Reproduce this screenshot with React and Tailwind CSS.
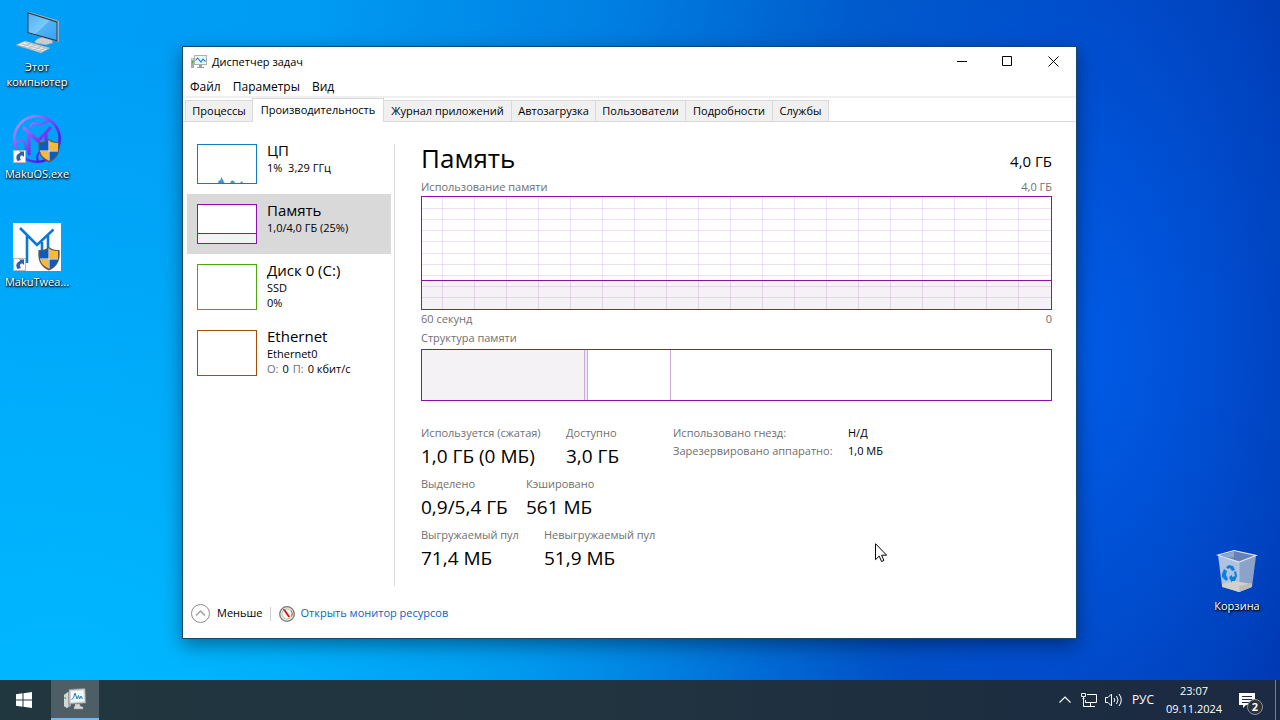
import React from "react";

const TABS = [
  { label: "Процессы", width: "w-[67px]" },
  { label: "Производительность", width: "w-[132px]", active: true },
  { label: "Журнал приложений", width: "w-[128px]" },
  { label: "Автозагрузка", width: "w-[84px]" },
  { label: "Пользователи", width: "w-[90px]" },
  { label: "Подробности", width: "w-[87px]" },
  { label: "Службы", width: "w-[56px]" },
];

const STATS = [
  { first: "w-[145px]", items: [["Используется (сжатая)", "1,0 ГБ (0 МБ)"], ["Доступно", "3,0 ГБ"]] },
  { first: "w-[105px]", items: [["Выделено", "0,9/5,4 ГБ"], ["Кэшировано", "561 МБ"]] },
  { first: "w-[123px]", items: [["Выгружаемый пул", "71,4 МБ"], ["Невыгружаемый пул", "51,9 МБ"]] },
];

function MonitorIcon({ className }) {
  return (
    <svg className={className} viewBox="0 0 24 22" aria-hidden="true">
      <path d="M1 7l4-3 3 1v13l-4 2-3-2z" fill="#a9abad" />
      <path d="M1 7l4-3v15l-1 1-3-2z" fill="#d5d7d8" />
      <circle cx="2.2" cy="10" r=".9" fill="#57c21c" />
      <path d="M6 1.500l16-1 .8 14.500L6 16z" fill="#d4d6d8" stroke="#86898c" strokeWidth=".7" />
      <path d="M8 3.300l12.500-.8.600 10.700L8 14z" fill="#f2fafe" />
      <path d="M8.500 11.500l2-1.500 1.500-5 2 6 1.500-3.500 1.200 3.500 1.300-3 1.500 3" fill="none" stroke="#2088c4" strokeWidth="1" />
      <path d="M12 16h5v2l3 1v2h-9v-2l1-1z" fill="#d5d7d9" stroke="#929597" strokeWidth=".5" />
    </svg>
  );
}

function TitleIcon() {
  return (
    <svg className="h-4 w-4" viewBox="0 0 16 16" aria-hidden="true">
      <path d="M0 4h3v10H0z" fill="#a9a9a9" />
      <path d="M.5 4.500h2v1.500h-2z" fill="#dcdcdc" />
      <path d="M1 7h1v2H1z" fill="#3fae27" />
      <path d="M3 1h13v10H3z" fill="#b0b0b0" />
      <path d="M4 2h11v8H4z" fill="#eaf8ff" />
      <path d="M4.500 6.500l2-2.500 3.500 4 2-3 2.500 2.500" fill="none" stroke="#1983bd" strokeWidth="1.100" />
      <path d="M8 11h3v2h2v1H6v-1h2z" fill="#9c9c9c" />
    </svg>
  );
}

function Shield() {
  return (
    <g transform="translate(0 -1)">
      <path d="M36 25c-3 2.500-6 3-10.500 3-1 11 2 16.500 10.500 20.500 8.500-4 11.500-9.500 10.500-20.500-4.500 0-7.500-.5-10.500-3z" fill="#58595b" />
      <path d="M35.500 27c-2.500 1.500-5 2-8.500 2v7.500h8.500z" fill="#0e5cb8" />
      <path d="M36.500 27c2.500 1.500 5 2 8.500 2v7.500h-8.500z" fill="#fdb933" />
      <path d="M27.300 37.500h8.200v8.800c-5-2.300-7.500-4.800-8.200-8.800z" fill="#fdb933" />
      <path d="M44.700 37.500h-8.200v8.800c5-2.300 7.500-4.800 8.200-8.800z" fill="#0e5cb8" />
      <path d="M36 26.500v20M27 37h18" stroke="#eaf1fa" strokeWidth="1" />
    </g>
  );
}

function ShortcutArrow() {
  return (
    <g>
      <rect x=".5" y="35.500" width="12" height="12" fill="#fafafa" stroke="#b9b9b9" />
      <path d="M4.500 46c-2.500-4-.5-7.500 3-8l-1.500-1.500h5v5.500l-1.500-1.500c-2.500 0-3.500 2-1.500 4.500z" fill="#2a60a8" />
    </g>
  );
}

function ComputerIcon() {
  return (
    <svg className="h-12 w-12" viewBox="0 0 48 48" aria-hidden="true">
      <defs>
        <linearGradient id="screen" x1="0" y1="0" x2="1" y2="1">
          <stop offset="0" stopColor="#4fb2f5" />
          <stop offset=".5" stopColor="#7cc9fb" />
          <stop offset=".52" stopColor="#4eb2f6" />
          <stop offset="1" stopColor="#3ca5ef" />
        </linearGradient>
      </defs>
      <path d="M24 31l5-2 10 3 1 3-7 2-11-2v-2z" fill="#c9cdd0" stroke="#83888c" strokeWidth=".5" />
      <path d="M15 3.500l30 9 .8 1v20.500l-31-9z" fill="#aeb3b7" />
      <path d="M14.500 4l30 9.500v20l-30-8.500z" fill="#263b4b" />
      <path d="M15.500 5.500l28 9v17.500l-28-7.800z" fill="url(#screen)" />
      <path d="M3 37l9-4 25 7-9 5z" fill="#e8ebed" stroke="#8f979d" strokeWidth=".6" />
      <path d="M6 37.500l24 6.500M9 36l24 6.500M12 34.500l24 6.500M9 39.500l9-4.500M14 41l9-4.500M20 42.500l9-4.500M25 44l8-4.500" stroke="#a7afb5" strokeWidth=".7" />
    </svg>
  );
}

function MakuOsIcon() {
  return (
    <svg className="h-12 w-12" viewBox="0 0 48 48" aria-hidden="true">
      <defs>
        <linearGradient id="maku" gradientUnits="userSpaceOnUse" x1="6" y1="6" x2="42" y2="42">
          <stop offset="0" stopColor="#b18cff" />
          <stop offset=".5" stopColor="#7a3cf8" />
          <stop offset="1" stopColor="#3c08f0" />
        </linearGradient>
      </defs>
      <g fill="none" stroke="url(#maku)" strokeLinecap="round">
        <circle cx="24" cy="24" r="22.700" strokeWidth="2.600" />
        <path d="M17 12c1-4 6-5 9-2.500 4 1 5-3.500 11-3.500M2 28c4-4 7-3 9-1 2 3 3 6 1 9M25 46c-2-4 0-8 3-10" strokeWidth="2.200" />
        <path d="M11 13l14 13 12-13M16 39V19M33 19v19" strokeWidth="3.200" />
      </g>
      <Shield />
      <ShortcutArrow />
    </svg>
  );
}

function MakuTweakerIcon() {
  return (
    <svg className="h-12 w-12 bg-white" viewBox="0 0 48 48" aria-hidden="true">
      <path d="M7 5l17 17L40.500 6.500M14 12v28M35 12v20M29 19v12" fill="none" stroke="#0b78d4" strokeWidth="2.600" />
      <Shield />
      <ShortcutArrow />
    </svg>
  );
}

function RecycleBinIcon() {
  return (
    <svg className="h-12 w-12" viewBox="0 0 48 48" aria-hidden="true">
      <path d="M5 8l21 7v30L9 39z" fill="#b0c2df" />
      <path d="M26 15l17-6-4 31-13 5z" fill="#8ba2c9" />
      <path d="M5 8l16-4.500 22 5-17 6.500z" fill="#6480b4" stroke="#e1e9f4" strokeWidth="1.200" />
      <path d="M21 4.500v6l-8 0-6-2z" fill="#8ea7cf" />
      <path d="M9 37l12-3 18 3-.5 3L26 45 9 40z" fill="#d0d0cc" />
      <path d="M26 45V39l13-3-.5 4z" fill="#bdbdb9" />
      <path d="M26 15v30" stroke="#c7d4e8" strokeWidth=".7" />
      <g fill="#0d7fdc">
        <path d="M13 20l3-2 4 1 2 4-3 1-2-3-2 1z" />
        <path d="M9 27l2-5 3 2-1 4 2 4-2 2-4-4z" />
        <path d="M16 30l3-2v2l3-1-1-4 2-1 1 5-2 5-3 0v2z" />
      </g>
    </svg>
  );
}

function DesktopIcon({ className, label, children }) {
  return (
    <button
      type="button"
      className={`absolute flex w-[74px] flex-col items-center text-center text-[11px] leading-[15px] text-white [text-shadow:1px_1px_2px_#000,0_1px_2px_#000] ${className}`}
    >
      {children}
      <span className="mt-[3px]">{label}</span>
    </button>
  );
}

function SideItem({ selected, tall, color, title, children, chart }) {
  return (
    <button
      type="button"
      aria-pressed={!!selected}
      className={`flex w-full items-start gap-[10px] pt-[10px] pl-[10px] text-left ${tall ? "h-[66px]" : "h-[60px]"} ${selected ? "bg-[#d9d9d9]" : ""}`}
    >
      <span className={`block w-[60px] shrink-0 border bg-white ${tall ? "h-[46px]" : "h-10"} ${color}`}>{chart}</span>
      <span className="-mt-1 block whitespace-nowrap">
        <span className="block text-[15px] leading-5">{title}</span>
        <span className="block text-[11px] leading-[15px]">{children}</span>
      </span>
    </button>
  );
}

function MemoryGraph() {
  const cols = Array.from({ length: 19 }, (_, i) => `${((20.500 + i * 32.050) / 630) * 100}%`);
  const rows = Array.from({ length: 9 }, (_, i) => `${(i + 1) * 10}%`);
  return (
    <svg className="block h-[114px] w-full border border-[#8b12ae] bg-white" role="img" aria-label="Использование памяти">
      <rect x="0" y="75%" width="100%" height="25%" fill="#f4f2f4" />
      <g stroke="#8b12ae" strokeOpacity=".13" shapeRendering="crispEdges">
        {cols.map((x) => (
          <line key={x} x1={x} x2={x} y1="0" y2="100%" />
        ))}
        {rows.map((y) => (
          <line key={y} x1="0" x2="100%" y1={y} y2={y} />
        ))}
      </g>
      <line x1="0" x2="100%" y1="74.500%" y2="74.500%" stroke="#8b12ae" shapeRendering="crispEdges" />
    </svg>
  );
}

function TaskManager() {
  return (
    <section
      aria-label="Диспетчер задач"
      className="relative mt-[46px] mr-[203px] ml-[182px] border border-[#14466b] bg-white text-black shadow-[0_6px_18px_rgba(0,0,0,0.4)]"
    >
      <header className="flex h-[30px] items-start pl-2">
        <h1 className="flex h-[30px] flex-1 items-center gap-[5px] text-[11px]">
          <TitleIcon />
          Диспетчер задач
        </h1>
        <button type="button" aria-label="Свернуть" className="flex h-7 w-[46px] items-center justify-center">
          <svg className="h-[11px] w-[11px]" viewBox="0 0 11 11"><path d="M0 5.500h10" stroke="#000" /></svg>
        </button>
        <button type="button" aria-label="Развернуть" className="flex h-7 w-[45px] items-center justify-center">
          <svg className="h-[11px] w-[11px]" viewBox="0 0 11 11"><path d="M.5.5h9v9h-9z" fill="none" stroke="#000" /></svg>
        </button>
        <button type="button" aria-label="Закрыть" className="flex h-7 w-[46px] items-center justify-center">
          <svg className="h-[11px] w-[11px]" viewBox="0 0 11 11"><path d="M.5.5l10 10M10.500.5l-10 10" stroke="#000" /></svg>
        </button>
      </header>

      <nav className="flex h-[21px] gap-3 border-b-2 border-[#f0f0f0] pl-[7px] text-xs leading-5">
        <button type="button">Файл</button>
        <button type="button">Параметры</button>
        <button type="button">Вид</button>
      </nav>

      <div role="tablist" className="flex h-6 items-end border-b border-[#d9d9d9] pl-[2px] text-[11px]">
        {TABS.map((t, i) =>
          t.active ? (
            <button key={t.label} type="button" role="tab" aria-selected="true" className={`-mb-px h-6 shrink-0 border border-b-0 border-[#d9d9d9] bg-white pb-px whitespace-nowrap ${t.width}`}>
              {t.label}
            </button>
          ) : (
            <button
              key={t.label}
              type="button"
              role="tab"
              aria-selected="false"
              className={`h-[21px] shrink-0 border-t border-[#d9d9d9] bg-[#f0f0f0] pt-px whitespace-nowrap ${i === 0 ? "border-l" : "border-r"} ${t.width}`}
            >
              {t.label}
            </button>
          ),
        )}
      </div>

      <div className="flex">
        <aside className="w-[208px] shrink-0 pt-3 pl-1">
          <SideItem
            color="border-[#117dbb]"
            title="ЦП"
            chart={
              <svg className="block h-full w-full" viewBox="0 0 58 38">
                <path d="M20 38l1-3 1 1 1.500-4 2 4 1 2zM32 38l2-3 1 1 1 0 1 2zM42 38l2-2 1 2z" fill="#117dbb" fillOpacity=".8" />
              </svg>
            }
          >
            1%&nbsp; 3,29 ГГц
          </SideItem>
          <SideItem
            selected
            color="border-[#8b12ae]"
            title="Память"
            chart={
              <span className="flex h-full flex-col justify-end">
                <span className="block h-[10px] border-t border-[#8b12ae] bg-[#f4f2f4]" />
              </span>
            }
          >
            1,0/4,0 ГБ (25%)
          </SideItem>
          <SideItem tall color="border-[#4da60c]" title="Диск 0 (C:)">
            SSD
            <br />
            0%
          </SideItem>
          <SideItem tall color="border-[#a74f01]" title="Ethernet">
            Ethernet0
            <span className="flex gap-1">
              <span className="text-[#707070]">О:</span>
              <span>0</span>
              <span className="text-[#707070]">П:</span>
              <span>0 кбит/с</span>
            </span>
          </SideItem>
        </aside>

        <main className="mt-[22px] ml-[3px] flex-1 border-l border-[#d9d9d9] pr-6 pb-[10px] pl-[26px]">
          <div className="flex items-end justify-between">
            <h2 className="text-[26px] leading-7">Память</h2>
            <span className="text-[15px] leading-[22px]">4,0 ГБ</span>
          </div>
          <div className="flex justify-between pt-[6px] text-[11px] leading-[18px] text-[#707070]">
            <span>Использование памяти</span>
            <span>4,0 ГБ</span>
          </div>
          <MemoryGraph />
          <div className="flex justify-between text-[11px] leading-[18px] text-[#707070]">
            <span>60 секунд</span>
            <span>0</span>
          </div>
          <p className="text-[11px] leading-5 text-[#707070]">Структура памяти</p>
          <div className="mt-px flex h-[52px] border border-[#8b12ae]">
            <div className="w-[163px] border-r border-[#cba9d8] bg-[#f4f2f4]" />
            <div className="w-[3px] border-r border-[#cba9d8] bg-[#f1e6f5]" />
            <div className="w-[83px] border-r border-[#cba9d8]" />
          </div>

          <div className="mt-[22px] flex">
            <div className="w-[252px] shrink-0 whitespace-nowrap">
              {STATS.map((row) => (
                <dl key={row.first} className="flex h-[51px]">
                  {row.items.map(([label, value], i) => (
                    <div key={label} className={i === 0 ? row.first : ""}>
                      <dt className="text-[11px] leading-5 text-[#707070]">{label}</dt>
                      <dd className="text-[19px] leading-[26px]">{value}</dd>
                    </div>
                  ))}
                </dl>
              ))}
            </div>
            <dl className="grid grid-cols-[175px_auto] content-start pt-px text-[11px] leading-[18px] whitespace-nowrap">
              <dt className="text-[#707070]">Использовано гнезд:</dt>
              <dd>Н/Д</dd>
              <dt className="text-[#707070]">Зарезервировано аппаратно:</dt>
              <dd>1,0 МБ</dd>
            </dl>
          </div>
        </main>
      </div>

      <footer className="flex h-[52px] items-center pt-[3px] pl-2 text-[11px]">
        <button type="button" className="flex items-center gap-[7px]">
          <svg className="h-[19px] w-[19px]" viewBox="0 0 19 19" fill="none" aria-hidden="true">
            <circle cx="9.500" cy="9.500" r="9" stroke="#8c8c8c" />
            <path d="M5 11.500l4.500-4.500 4.500 4.500" stroke="#a0a0a0" strokeWidth="1.500" />
          </svg>
          Меньше
        </button>
        <span className="ml-2 h-[14px] w-px bg-[#d0d0d0]" />
        <svg className="ml-2 h-4 w-4" viewBox="0 0 16 16" aria-hidden="true">
          <circle cx="8" cy="8" r="7.300" fill="#e8e8e0" stroke="#777" strokeWidth="1.300" />
          <circle cx="8" cy="8" r="5" fill="#f7f7f1" stroke="#b8b8ac" strokeWidth=".8" />
          <path d="M12 4.500a5 5 0 0 1 .5 6" fill="none" stroke="#cf5a3c" />
          <path d="M3.500 3l2.500.5 5 7-1.500 1z" fill="#d40f16" />
        </svg>
        <a href="#resmon" className="ml-[5px] text-[#0066cc]">Открыть монитор ресурсов</a>
      </footer>
    </section>
  );
}

function Taskbar() {
  return (
    <footer className="relative flex h-10 shrink-0 items-stretch bg-linear-to-r from-[#21373f] via-[#20333f] to-[#1b2942] text-xs text-white">
      <button type="button" aria-label="Пуск" className="flex w-12 items-center justify-center">
        <svg className="h-4 w-4" viewBox="0 0 16 16" fill="#fff">
          <path d="M0 2.200l6.500-.9v6.200H0zM7.500 1.200L16 0v7.500H7.500zM0 8.500h6.500v6.200L0 13.800zM7.500 8.500H16V16l-8.500-1.200z" />
        </svg>
      </button>
      <button type="button" aria-label="Диспетчер задач" className="ml-[3px] flex w-12 items-center justify-center border-b-2 border-[#76b9ed] bg-[#4d5e66]">
        <MonitorIcon className="h-[22px] w-6" />
      </button>
      <div className="ml-auto flex items-center">
        <button type="button" aria-label="Скрытые значки">
          <svg className="h-3 w-3" viewBox="0 0 12 12" fill="none" stroke="#fff"><path d="M.5 8.500L6 3l5.500 5.500" strokeWidth="1.200" /></svg>
        </button>
        <button type="button" aria-label="Сеть" className="ml-[10px]">
          <svg className="h-4 w-4" viewBox="0 0 16 16" fill="none" stroke="#fff">
            <path d="M6 2.500h9.500v8H4.500V8M9.500 11v3M6 14.500h8M.5 1.500h4v3h-4zM2.500 5v9.500H6M1.500 6.500h2" />
          </svg>
        </button>
        <button type="button" aria-label="Громкость" className="ml-2">
          <svg className="h-4 w-[17px]" viewBox="0 0 17 16" fill="none" stroke="#fff">
            <path d="M.5 5.500h2.500L6.500 2v12L3 10.500H.5zM9 6q1.500 2 0 4M11.500 4q3 4 0 8M14 2q4.500 6 0 12" />
          </svg>
        </button>
        <button type="button" className="ml-[9px] w-6">РУС</button>
        <button type="button" className="ml-2 w-[62px] text-center text-[11px] leading-[18px]">
          <span className="block">23:07</span>
          <span className="block">09.11.2024</span>
        </button>
        <button type="button" aria-label="Уведомления: 2" className="relative ml-[14px] flex h-10 w-9 items-center">
          <svg className="h-4 w-4" viewBox="0 0 16 16">
            <path d="M0 1h16v12H7l-3 3v-3H0z" fill="#fff" />
            <path d="M3 4.500h10M3 7.500h10M3 10.500h7" stroke="#1d2b42" />
          </svg>
          <span className="absolute top-[19px] left-2 flex h-4 w-4 items-center justify-center rounded-full border border-[#8f959c] bg-[#2d3239] text-[11px] font-bold">2</span>
        </button>
        <span className="h-10 w-px bg-[#747e8c]" />
        <span className="w-1" />
      </div>
    </footer>
  );
}

export default function App() {
  return (
    <div className="flex min-h-screen flex-col overflow-hidden bg-[#0080e8] font-['Open_Sans','Noto_Sans',sans-serif]">
      <div className="relative flex-1 bg-[radial-gradient(ellipse_22%_70%_at_84%_52%,#005ce8_0%,#0050d400_100%),radial-gradient(ellipse_65%_95%_at_5%_100%,#00b8ff_0%,#00b0ff00_100%),linear-gradient(98deg,#009ff8_0%,#009cf4_22%,#0080e2_44%,#005ccc_62%,#0046c0_80%,#0039b2_100%)]">
        <DesktopIcon className="top-2 left-0" label={<>Этот<br />компьютер</>}>
          <ComputerIcon />
        </DesktopIcon>
        <DesktopIcon className="top-[115px] left-0" label="MakuOS.exe">
          <MakuOsIcon />
        </DesktopIcon>
        <DesktopIcon className="top-[223px] left-0" label="MakuTwea...">
          <MakuTweakerIcon />
        </DesktopIcon>
        <DesktopIcon className="top-[547px] right-[6px]" label="Корзина">
          <RecycleBinIcon />
        </DesktopIcon>
        <TaskManager />
        <svg className="absolute top-[543px] left-[875px] h-[19px] w-3" viewBox="0 0 12 19" aria-hidden="true">
          <path d="M.5.7v16l3.700-3.600 2.400 5.400 2.300-1-2.300-5.300h5z" fill="#fff" stroke="#000" />
        </svg>
      </div>
      <Taskbar />
    </div>
  );
}
